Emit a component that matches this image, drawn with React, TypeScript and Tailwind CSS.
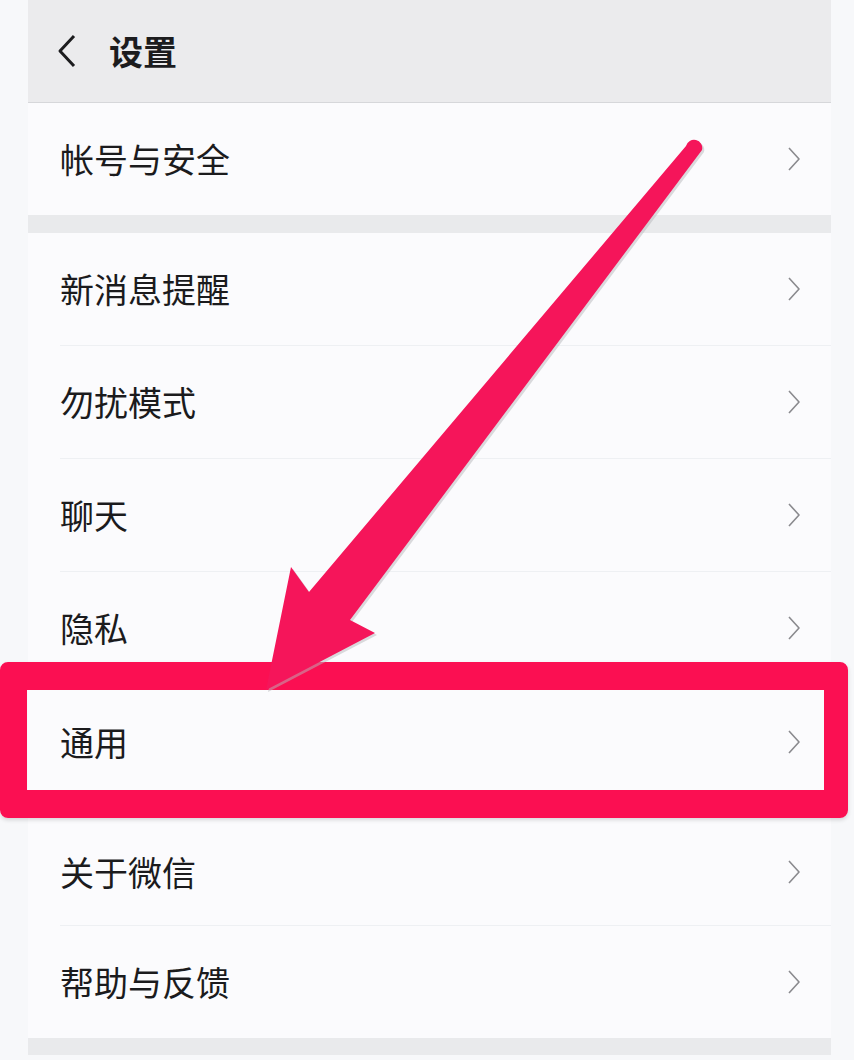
import type { ReactNode } from 'react';

const font = { fontFamily: '"Noto Sans CJK SC", "Noto Sans", sans-serif' };

function Chevron() {
  return (
    <svg width="14" height="26" viewBox="0 0 14 26" fill="none">
      <polyline points="2,2 12,13 2,24" stroke="#8a8a8e" strokeWidth="1.6" strokeLinejoin="round" />
    </svg>
  );
}

function Row({
  label,
  className,
  divider = true,
}: {
  label: ReactNode;
  className: string;
  divider?: boolean;
}) {
  return (
    <div className={`flex pl-[32px] ${className}`}>
      <div
        className={`flex flex-1 items-center justify-between pr-[30px] ${
          divider ? 'border-b border-[#eef0f3]' : ''
        }`}
      >
        <span className="text-[34px] leading-none text-[#1b1b1d]">{label}</span>
        <Chevron />
      </div>
    </div>
  );
}

export default function App() {
  return (
    <div className="relative h-[1060px] w-[854px] overflow-hidden bg-[#f7f8fa]" style={font}>
      <div className="ml-[28px] flex w-[803px] flex-col bg-[#fbfbfd]">
        {/* header */}
        <div className="flex h-[103px] items-center gap-[32px] border-b border-[#d6d7da] bg-[#ebebed] pl-[29px]">
          <svg width="20" height="34" viewBox="0 0 20 34" fill="none">
            <polyline points="17,2 3,17 17,32" stroke="#1c1c1e" strokeWidth="3" strokeLinejoin="round" />
          </svg>
          <span className="text-[34px] font-bold leading-none text-[#1c1c1e]">设置</span>
        </div>

        <Row label="帐号与安全" className="h-[112px]" divider={false} />
        <div className="h-[18px] bg-[#e9eaec]" />

        <Row label="新消息提醒" className="h-[113px]" />
        <Row label="勿扰模式" className="h-[113px]" />
        <Row label="聊天" className="h-[113px]" />
        <Row label="隐私" className="h-[113px]" />
        <Row label="通用" className="h-[115px]" />
        <Row label="关于微信" className="h-[126px] pt-[18px]" />
        <Row label="帮助与反馈" className="h-[112px]" divider={false} />
        <div className="h-[17px] bg-[#e9eaec]" />
      </div>

      {/* highlight box */}
      <div className="absolute left-0 top-[662px] h-[156px] w-[848px] rounded-[8px] border-b-[28px] border-l-[27px] border-r-[24px] border-t-[28px] border-[#fb0f52] shadow-[0_2px_4px_rgba(0,0,0,0.15)]" />

      {/* arrow */}
      <svg className="pointer-events-none absolute left-0 top-0" width="854" height="1060" viewBox="0 0 854 1060">
        <path
          d="M 688,148 A 8,8 0 0 1 704,152 L 352,622 L 377,635 L 268,692 L 293,569 L 311,594 Z"
          fill="#b8b8bc"
          opacity="0.5"
        />
        <path
          d="M 686,146 A 8,8 0 0 1 702,150 L 350,620 L 375,633 L 266,690 L 291,567 L 309,592 Z"
          fill="#f5155a"
        />
      </svg>
    </div>
  );
}
